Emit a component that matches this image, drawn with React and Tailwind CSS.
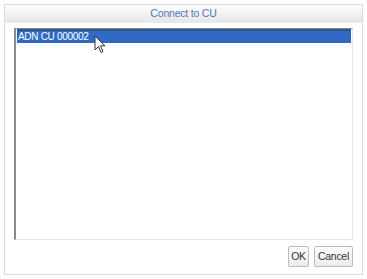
export default function App() {
  return (
    <div className="w-[367px] h-[279px] bg-white p-[4px]" style={{ fontFamily: "'Liberation Sans', Arial, sans-serif" }}>
      <div className="w-[359px] h-[271px] border border-[#dcdcdc] flex flex-col">
        <div className="h-[18px] flex items-center justify-center bg-gradient-to-b from-white to-[#e6e6e6] border-b border-[#ececec] text-[10.5px] tracking-[-0.2px] text-[#4a78c0]">
          Connect to CU
        </div>
        <div className="flex-1 flex flex-col px-[9px] pt-[5px] pb-[7px]">
          <div className="relative h-[212px] border-t border-l-2 border-t-[#8a8a8a] border-l-[#8a8a8a] border-r border-b border-r-[#e4e4e4] border-b-[#e4e4e4] bg-white pl-[1px] pr-[1px]">
            <div className="h-[14px] bg-[#316ac5] border-t-2 border-[#2d548f] text-white text-[10px] tracking-[-0.3px] leading-[11px] pl-[1px]">
              ADN CU 000002
            </div>
            <svg className="absolute left-[78px] top-[6px]" width="14" height="20" viewBox="0 0 14 20">
              <path d="M1 1 L1 15 L4.5 11.5 L7 17.5 L9 16.5 L6.5 10.8 L11 10.8 Z" fill="white" stroke="#333" strokeWidth="1" strokeLinejoin="round" />
            </svg>
          </div>
          <div className="flex justify-end gap-[5px] mt-[6px]">
            <button className="h-[21px] w-[21px] border border-[#bcbcbc] rounded-[2px] bg-gradient-to-b from-white to-[#ececec] text-[10.5px] tracking-[-0.3px] text-[#333]">OK</button>
            <button className="h-[21px] w-[39px] border border-[#bcbcbc] rounded-[2px] bg-gradient-to-b from-white to-[#ececec] text-[10.5px] tracking-[-0.3px] text-[#333]">Cancel</button>
          </div>
        </div>
      </div>
    </div>
  );
}
